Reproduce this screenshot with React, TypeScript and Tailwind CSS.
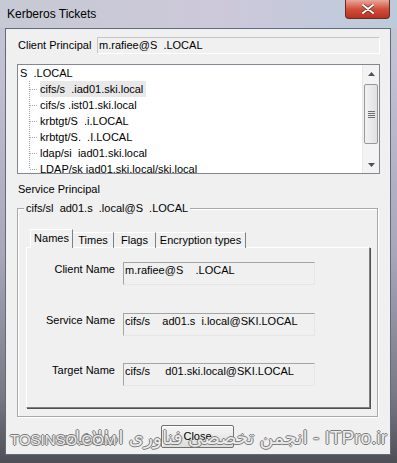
import React from 'react';

const treeItems = [
  'cifs/s\u00a0\u00a0.iad01.ski.local',
  'cifs/s\u00a0.ist01.ski.local',
  'krbtgt/S\u00a0\u00a0.i.LOCAL',
  'krbtgt/S.\u00a0\u00a0.I.LOCAL',
  'ldap/si\u00a0\u00a0iad01.ski.local',
  'LDAP/sk\u00a0iad01.ski.local/ski.local',
];

const tabs = [
  { label: 'Names', w: 'w-[43px]' },
  { label: 'Times', w: 'w-[41px]' },
  { label: 'Flags', w: 'w-[42px]' },
  { label: 'Encryption types', w: 'w-[90px]' },
];

const fields = [
  { label: 'Client Name', value: 'm.rafiee@S\u00a0\u00a0\u00a0\u00a0.LOCAL' },
  { label: 'Service Name', value: 'cifs/s\u00a0\u00a0\u00a0\u00a0ad01.s\u00a0\u00a0i.local@SKI.LOCAL' },
  { label: 'Target Name', value: 'cifs/s\u00a0\u00a0\u00a0\u00a0\u00a0d01.ski.local@SKI.LOCAL' },
];

function TreeBranch({ last }: { last?: boolean }) {
  return (
    <svg width="22" height="16" className="shrink-0">
      <line x1="11.5" y1="0" x2="11.5" y2={last ? 8 : 16} stroke="#a0a0a0" strokeDasharray="1 1" />
      <line x1="12" y1="8.5" x2="20" y2="8.5" stroke="#a0a0a0" strokeDasharray="1 1" />
    </svg>
  );
}

function ScrollBar() {
  return (
    <div className="w-[17px] h-full flex flex-col bg-[#f3f3f3] border-l border-[#e8e8e8]">
      <div className="h-[17px] flex items-center justify-center">
        <svg width="7" height="4"><path d="M0 4 L3.5 0 L7 4 Z" fill="#505050" /></svg>
      </div>
      <div className="mt-[2px] mx-[1px] h-[60px] rounded-[2px] border border-[#979797] bg-[linear-gradient(to_right,#f2f2f2,#e0e0e0)] flex flex-col items-center justify-center gap-[1px]">
        <div className="w-[7px] h-px bg-[#707070]" />
        <div className="w-[7px] h-px bg-[#707070]" />
        <div className="w-[7px] h-px bg-[#707070]" />
        <div className="w-[7px] h-px bg-[#707070]" />
      </div>
      <div className="flex-1" />
      <div className="h-[17px] flex items-center justify-center">
        <svg width="7" height="4"><path d="M0 0 L3.5 4 L7 0 Z" fill="#505050" /></svg>
      </div>
    </div>
  );
}

export default function App() {
  return (
    <div className="relative w-[397px] h-[463px] overflow-hidden bg-[linear-gradient(to_bottom,#c4c8d3_0%,#c2c0d2_15%,#a8a6b8_55%,#7a7a86_85%,#4e4e56_100%)] font-['Liberation_Sans','DejaVu_Sans',sans-serif] text-[11px] text-black">
      {/* title bar */}
      <div className="h-[28px] flex items-start bg-[linear-gradient(to_right,#c6cad4,#cdc8da_55%,#bccbdb)]">
        <span className="pl-[7px] pt-[7px] text-[12px] leading-[14px] text-black">Kerberos Tickets</span>
        <div className="ml-auto mr-[7px] w-[45px] h-[19px] rounded-b-[4px] border border-t-0 border-[#6b2a22] bg-[linear-gradient(to_bottom,#e8a89a,#d0503c_50%,#b83220)] flex items-center justify-center">
          <svg width="12" height="10" viewBox="0 0 12 10">
            <path d="M1 1 L11 9 M11 1 L1 9" stroke="#5a2018" strokeWidth="3.2" strokeLinecap="round" />
            <path d="M1 1 L11 9 M11 1 L1 9" stroke="#ffffff" strokeWidth="2" strokeLinecap="round" />
          </svg>
        </div>
      </div>

      {/* client area */}
      <div className="ml-[5px] w-[386px] h-[427px] bg-[#f0f0f0] border border-[#5d6b7a] flex flex-col pl-[11px]">
        <div className="mt-[8px] h-[17px] flex items-center">
          <span className="w-[80px] pl-[1px]">Client Principal</span>
          <div className="w-[283px] h-[17px] border border-[#c6c6c6] border-r-white border-b-white bg-[#f0f0f0] pl-[1px] leading-[15px]">
            m.rafiee@S{'\u00a0\u00a0'}.LOCAL
          </div>
        </div>

        {/* tree */}
        <div className="mt-[10px] w-[363px] h-[110px] border border-[#828790] bg-white flex">
          <div className="flex-1 overflow-hidden flex flex-col">
            <div className="h-[16px] leading-[16px] pl-[2px]">S{'\u00a0\u00a0'}.LOCAL</div>
            {treeItems.map((t, i) => (
              <div key={t} className="h-[16px] flex items-center shrink-0">
                <TreeBranch last={i === treeItems.length - 1} />
                <span className={`leading-[16px] pr-[3px] ${i === 0 ? 'bg-[#e8e8e8]' : ''}`}>{t}</span>
              </div>
            ))}
          </div>
          <ScrollBar />
        </div>

        <div className="mt-[8px] h-[14px] leading-[14px] pl-[1px]">Service Principal</div>

        {/* group box */}
        <div className="relative mt-[12px] w-[361px] h-[209px] border border-[#a8a8a8] [box-shadow:inset_1px_1px_0_#fff,1px_1px_0_#fff] pl-[8px] pt-[20px]">
          <span className="absolute left-[6px] -top-[8px] px-[2px] bg-[#f0f0f0] leading-[14px]">
            cifs/sl{'\u00a0\u00a0'}ad01.s{'\u00a0\u00a0'}.local@S{'\u00a0\u00a0'}.LOCAL
          </span>

          <div className="flex items-end h-[19px] pl-[4px]">
            {tabs.map((t, i) => (
              <div
                key={t.label}
                className={
                  i === 0
                    ? `relative z-10 h-[19px] ${t.w} border-t border-l border-white border-r border-r-[#808080] bg-[#f0f0f0] flex items-center justify-center pb-[1px]`
                    : `h-[16px] ${t.w} border-t border-white border-r border-r-[#808080] flex items-center justify-center`
                }
              >
                {t.label}
              </div>
            ))}
          </div>
          <div className="-mt-px w-[344px] h-[161px] border border-t-white border-l-white border-r-[#808080] border-b-[#808080] [box-shadow:1px_1px_0_#505050] pt-[14px] flex flex-col">
            {fields.map((f, i) => (
              <div key={f.label} className={`flex items-start ${i === 0 ? '' : i === 1 ? 'mt-[28px]' : 'mt-[27px]'}`}>
                <span className="w-[88px] text-right pt-[1px] leading-[13px]">{f.label}</span>
                <div className="ml-[8px] w-[192px] h-[23px] border border-[#a4a4a4] border-r-[#e6e6e6] border-b-[#e6e6e6] bg-[#f0f0f0] pl-[1px] pt-[1px] leading-[13px]">
                  {f.value}
                </div>
              </div>
            ))}
          </div>
        </div>

        <div className="mt-[8px] ml-[144px] w-[73px] h-[23px] border border-[#707070] rounded-[2px] bg-[linear-gradient(to_bottom,#f6f6f6,#dddddd)] [box-shadow:inset_1px_1px_0_#fff] flex items-center justify-center">
          Close
        </div>
      </div>

      {/* watermark */}
      <div className="absolute right-[10px] top-[427px] whitespace-nowrap text-[19px] leading-[22px] text-[#ececec] [text-shadow:-1px_0_#7a7a7a,1px_0_#7a7a7a,0_-1px_#7a7a7a,0_1px_#7a7a7a]" dir="ltr">
        انجمن تخصصی فناوری اطلاعات - ITPro.ir
      </div>
      <div className="absolute left-[10px] top-[431px] whitespace-nowrap text-[15px] leading-[18px] text-[#ececec] [text-shadow:-1px_0_#7a7a7a,1px_0_#7a7a7a,0_-1px_#7a7a7a,0_1px_#7a7a7a]">
        TOSINSO.COM
      </div>
    </div>
  );
}
